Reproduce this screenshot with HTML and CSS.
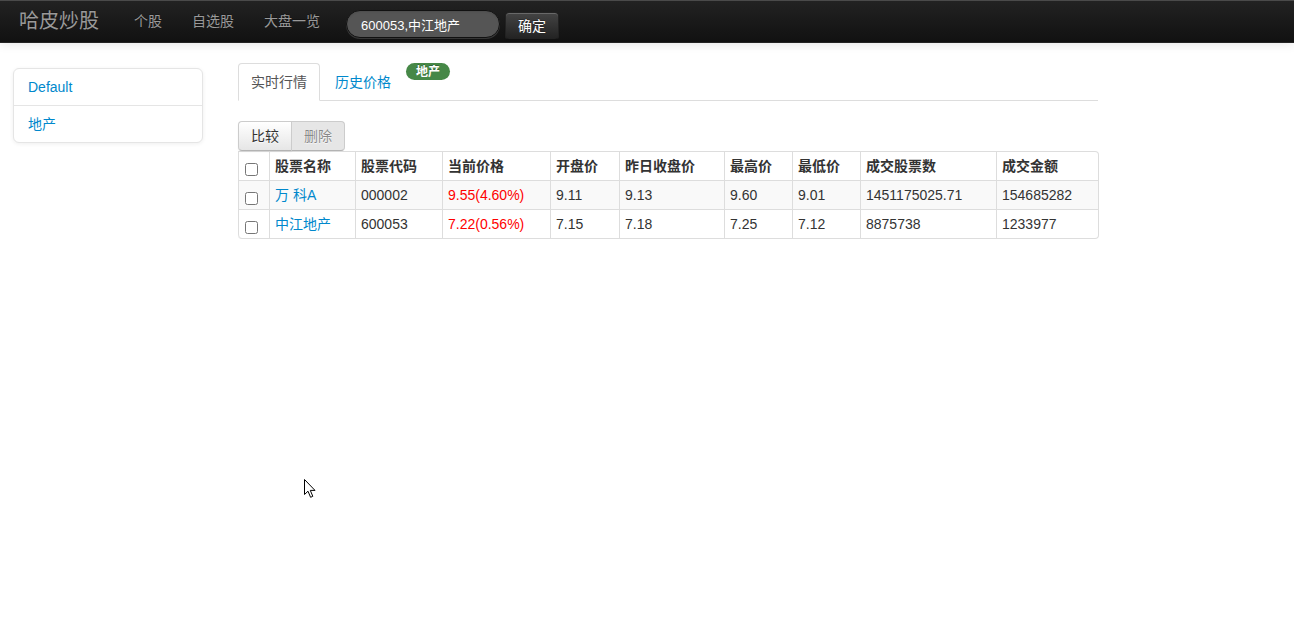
FILE: index.html
```html
<!DOCTYPE html>
<html lang="zh">
<head>
<meta charset="utf-8">
<title>哈皮炒股</title>
<link rel="stylesheet" href="styles.css">
</head>
<body>
<header class="navbar">
  <div class="navbar-inner">
    <a class="brand" href="#">哈皮炒股</a>
    <nav class="nav">
      <a href="#">个股</a>
      <a href="#">自选股</a>
      <a href="#">大盘一览</a>
    </nav>
    <form class="navbar-search">
      <input class="search-query" type="text" value="600053,中江地产">
      <button class="btn-inverse" type="button">确定</button>
    </form>
  </div>
</header>

<div class="page">
  <aside class="sidebar">
    <ul class="sidenav">
      <li><a href="#">Default</a></li>
      <li><a href="#">地产</a></li>
    </ul>
  </aside>

  <main class="main">
    <ul class="tabs">
      <li class="tab active"><a href="#">实时行情</a></li>
      <li class="tab"><a href="#">历史价格</a></li>
      <li class="tab-badge"><span class="badge">地产</span></li>
    </ul>

    <div class="btn-group">
      <button class="btn" type="button">比较</button>
      <button class="btn disabled" type="button">删除</button>
    </div>

    <table class="grid">
      <colgroup>
        <col class="c-check">
        <col class="c-name">
        <col class="c-code">
        <col class="c-price">
        <col class="c-open">
        <col class="c-close">
        <col class="c-high">
        <col class="c-low">
        <col class="c-vol">
        <col class="c-amt">
      </colgroup>
      <thead>
        <tr>
          <th><input type="checkbox"></th>
          <th>股票名称</th>
          <th>股票代码</th>
          <th>当前价格</th>
          <th>开盘价</th>
          <th>昨日收盘价</th>
          <th>最高价</th>
          <th>最低价</th>
          <th>成交股票数</th>
          <th>成交金额</th>
        </tr>
      </thead>
      <tbody>
        <tr class="odd">
          <td><input type="checkbox"></td>
          <td><a href="#">万 科A</a></td>
          <td>000002</td>
          <td class="up">9.55(4.60%)</td>
          <td>9.11</td>
          <td>9.13</td>
          <td>9.60</td>
          <td>9.01</td>
          <td>1451175025.71</td>
          <td>154685282</td>
        </tr>
        <tr>
          <td><input type="checkbox"></td>
          <td><a href="#">中江地产</a></td>
          <td>600053</td>
          <td class="up">7.22(0.56%)</td>
          <td>7.15</td>
          <td>7.18</td>
          <td>7.25</td>
          <td>7.12</td>
          <td>8875738</td>
          <td>1233977</td>
        </tr>
      </tbody>
    </table>
  </main>
</div>

<svg class="cursor" width="13" height="20" viewBox="0 0 13 20" aria-hidden="true">
  <path d="M0.5 0.5 L0.5 15.5 L4 12.2 L6.6 18.3 L8.8 17.3 L6.3 11.4 L11 11.4 Z" fill="#fff" stroke="#000" stroke-width="1" stroke-linejoin="round"/>
</svg>
</body>
</html>
```

FILE: styles.css
```css
* { box-sizing: border-box; }

html, body {
  margin: 0;
  padding: 0;
}

body {
  font-family: "Liberation Sans", Arial, "Noto Sans CJK SC", sans-serif;
  font-size: 14px;
  line-height: 20px;
  color: #333;
  background: #fff;
  position: relative;
  min-height: 638px;
}

a { color: #0088cc; text-decoration: none; }

/* navbar */
.navbar-inner {
  height: 43px;
  display: flex;
  align-items: flex-start;
  background: linear-gradient(to bottom, #222222, #111111);
  border-top: 1px solid #4a4a4a;
  border-bottom: 1px solid #252525;
  box-shadow: 0 1px 10px rgba(0,0,0,0.1);
}

.brand {
  display: block;
  padding: 9px 20px 10px 19px;
  font-size: 20px;
  line-height: 22px;
  color: #999;
  text-shadow: 0 -1px 0 rgba(0,0,0,0.25);
}

.nav {
  display: flex;
}

.nav a {
  display: block;
  padding: 10px 15px 11px;
  color: #999;
  text-shadow: 0 -1px 0 rgba(0,0,0,0.25);
}

.navbar-search {
  display: flex;
  align-items: flex-start;
  margin: 0 0 0 11px;
  padding-top: 9px;
}

.search-query {
  width: 154px;
  height: 28px;
  padding: 4px 14px;
  font-family: "Liberation Sans", Arial, "Noto Sans CJK SC", sans-serif;
  font-size: 13px;
  line-height: 18px;
  color: #fff;
  background: #555;
  border: 1px solid #111;
  border-radius: 15px;
  box-shadow: inset 0 1px 2px rgba(0,0,0,0.1), 0 1px 0 rgba(255,255,255,0.15);
  outline: none;
}

.btn-inverse {
  margin: 2px 0 0 5px;
  height: 28px;
  width: 54px;
  padding: 4px 0;
  font-family: "Liberation Sans", Arial, "Noto Sans CJK SC", sans-serif;
  font-size: 14px;
  line-height: 18px;
  color: #fff;
  background: linear-gradient(to bottom, #444444, #222222);
  border: 1px solid #222;
  border-bottom-color: #111;
  border-radius: 4px;
  text-shadow: 0 -1px 0 rgba(0,0,0,0.25);
  box-shadow: inset 0 1px 0 rgba(255,255,255,0.2), 0 1px 2px rgba(0,0,0,0.05);
}

/* page */
.page {
  display: flex;
  align-items: flex-start;
  padding-left: 13px;
}

.sidebar {
  width: 190px;
  margin-top: 25px;
  flex: none;
}

.sidenav {
  list-style: none;
  margin: 0;
  padding: 0;
  background: #fff;
  border: 1px solid #e5e5e5;
  border-radius: 6px;
  box-shadow: 0 1px 4px rgba(0,0,0,0.065);
}

.sidenav li + li { border-top: 1px solid #e5e5e5; }

.sidenav a {
  display: block;
  padding: 8px 14px;
  line-height: 20px;
}

.main {
  width: 860px;
  margin-left: 35px;
  margin-top: 20px;
  flex: none;
}

/* tabs */
.tabs {
  list-style: none;
  display: flex;
  align-items: flex-start;
  margin: 0 0 20px;
  padding: 0;
  border-bottom: 1px solid #ddd;
  width: 860px;
}

.tab {
  margin-right: 2px;
  margin-bottom: -1px;
}

.tab a {
  display: block;
  padding: 8px 12px;
  line-height: 20px;
  border: 1px solid transparent;
  border-radius: 4px 4px 0 0;
}

.tab.active a {
  color: #555;
  background: #fff;
  border-color: #ddd #ddd transparent;
}

.tab-badge {
  padding-top: 0;
  line-height: 17px;
}

.badge {
  display: inline-block;
  vertical-align: top;
  padding: 2px 10px 1px;
  font-size: 12px;
  font-weight: bold;
  line-height: 14px;
  color: #fff;
  background: #468847;
  border-radius: 9px;
  text-shadow: 0 -1px 0 rgba(0,0,0,0.25);
}

/* buttons */
.btn-group {
  display: flex;
}

.btn {
  height: 30px;
  padding: 4px 12px;
  font-family: "Liberation Sans", Arial, "Noto Sans CJK SC", sans-serif;
  font-size: 14px;
  line-height: 20px;
  color: #333;
  background: linear-gradient(to bottom, #ffffff, #e6e6e6);
  border: 1px solid #cccccc;
  border-bottom-color: #b3b3b3;
  text-shadow: 0 1px 1px rgba(255,255,255,0.75);
  box-shadow: inset 0 1px 0 rgba(255,255,255,0.2), 0 1px 2px rgba(0,0,0,0.05);
}

.btn:first-child { border-radius: 4px 0 0 4px; }
.btn:last-child { border-radius: 0 4px 4px 0; margin-left: -1px; }

.btn.disabled {
  background: #e6e6e6;
  color: rgba(51,51,51,0.55);
  box-shadow: none;
}

/* table */
.grid {
  width: 860px;
  table-layout: fixed;
  border-collapse: separate;
  border-spacing: 0;
  border: 1px solid #ddd;
  border-left: 0;
  border-radius: 0 4px 4px 4px;
}

.c-check { width: 31px; }
.c-name { width: 86px; }
.c-code { width: 87px; }
.c-price { width: 108px; }
.c-open { width: 69px; }
.c-close { width: 105px; }
.c-high { width: 68px; }
.c-low { width: 68px; }
.c-vol { width: 136px; }
.c-amt { width: 102px; }

.grid th,
.grid td {
  height: 28px;
  padding: 4px 5px;
  line-height: 20px;
  text-align: left;
  vertical-align: top;
  border-left: 1px solid #ddd;
  white-space: nowrap;
}

.grid td { height: 29px; }

.grid th:first-child,
.grid td:first-child { padding: 4px 0 4px 6px; }

.grid td { border-top: 1px solid #ddd; }

.grid th { font-weight: bold; }

.grid tr.odd td { background: #f9f9f9; }

.grid tbody tr:last-child td:first-child { border-bottom-left-radius: 4px; }

.grid input[type="checkbox"] {
  display: block;
  margin: 7px 0 0;
  width: 13px;
  height: 13px;
}

.up { color: #ff0000; }

.cursor {
  position: absolute;
  left: 304px;
  top: 479px;
}
```
